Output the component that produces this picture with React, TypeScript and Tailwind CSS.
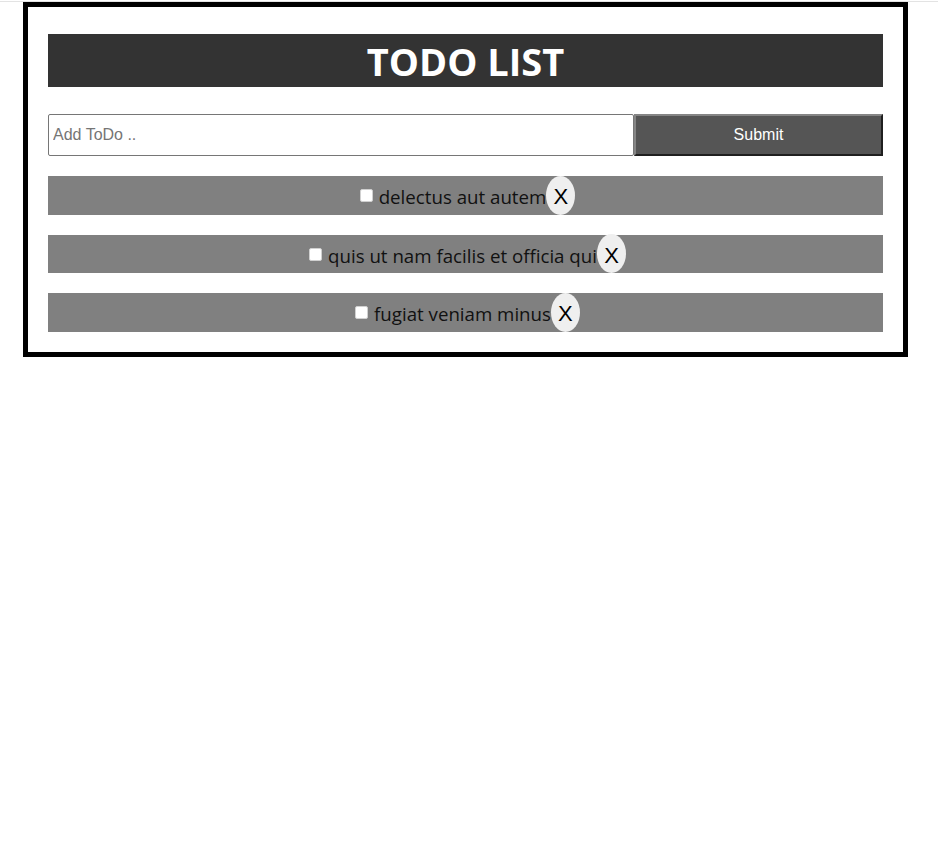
import React from "react";

const todos = [
  "delectus aut autem",
  "quis ut nam facilis et officia qui",
  "fugiat veniam minus",
];

export default function App() {
  return (
    <div className="min-h-[868px] bg-white">
      <div className="h-px mt-px bg-[#e3e3e3]" />
      <div className="ml-[23px] w-[885px] border-[5px] border-black px-[20px] pt-[27px] pb-[20px]">
        <div className="h-[53px] bg-[#333333] flex items-center justify-center">
          <h1
            className="text-white font-bold text-[38px] leading-none"
            style={{ fontFamily: '"Open Sans", "Noto Sans", sans-serif' }}
          >
            TODO LIST
          </h1>
        </div>
        <div className="mt-[27px] flex h-[42px]">
          <input
            type="text"
            placeholder="Add ToDo .."
            className="w-[586px] h-full border border-[#767676] rounded-[2px] px-[4px] text-[16px] text-black placeholder:text-[#757575] outline-none bg-white"
            style={{ fontFamily: '"Liberation Sans", Arial, sans-serif' }}
          />
          <button
            className="flex-1 h-full bg-[#555555] text-white text-[16px] border-2 border-t-[#858585] border-l-[#858585] border-r-[#1f1f1f] border-b-[#1f1f1f]"
            style={{ fontFamily: '"Liberation Sans", Arial, sans-serif' }}
          >
            Submit
          </button>
        </div>
        <div className="mt-[20px] flex flex-col gap-[20px]">
          {todos.map((t) => (
            <div
              key={t}
              className="h-[38.5px] bg-[#808080] flex items-center justify-center"
            >
              <input
                type="checkbox"
                className="appearance-none w-[13px] h-[13px] bg-white rounded-[2px] border border-[#d0d0d0] ml-[4px] mr-[6px] mt-[1px] shrink-0"
              />
              <span
                className="text-[18.7px] text-[#111111] leading-none pt-[5px]"
                style={{ fontFamily: '"Open Sans", "Noto Sans", sans-serif' }}
              >
                {t}
              </span>
              <button
                className="w-[29px] h-[39px] rounded-[50%] bg-[#efefef] text-black text-[22px] leading-none flex items-center justify-center pt-[4px] shrink-0"
                style={{ fontFamily: '"Liberation Sans", Arial, sans-serif' }}
              >
                X
              </button>
            </div>
          ))}
        </div>
      </div>
    </div>
  );
}
